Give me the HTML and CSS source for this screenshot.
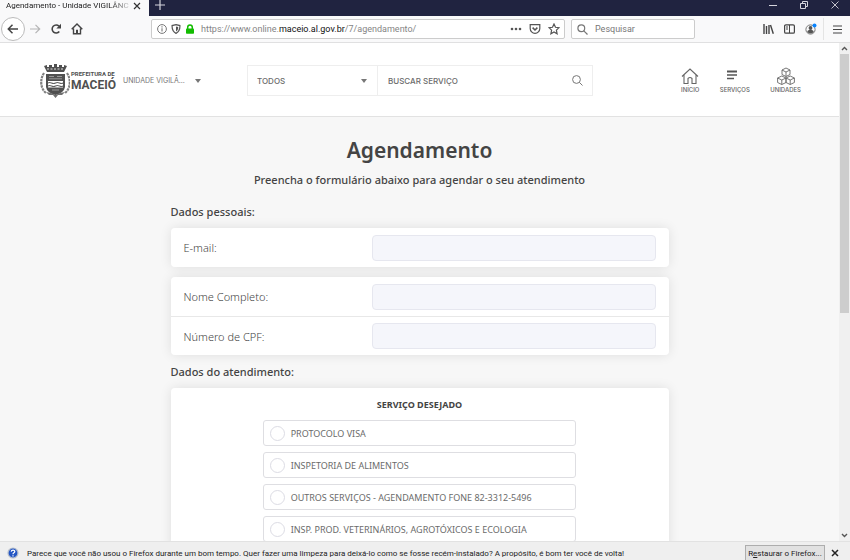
FILE: index.html
```html
<!DOCTYPE html>
<html lang="pt-BR">
<head>
    <meta charset="UTF-8">
    <meta name="viewport" content="width=device-width, initial-scale=1.0">
    <title>Agendamento - Unidade VIGILÂNCIA</title>
    <link rel="stylesheet" href="styles.css">
</head>
<body>
    <div class="titlebar">
        <div class="tab">
            <span class="tab-title">Agendamento - Unidade VIGILÂNC</span>
            <button class="icon-btn" aria-label="Fechar aba">
                <svg width="8" height="8" viewBox="0 0 8 8"><path d="M1 1l6 6M7 1l-6 6" stroke="#333" stroke-width="1.2"/></svg>
            </button>
        </div>
        <button class="icon-btn new-tab" aria-label="Nova aba">
            <svg width="10" height="10" viewBox="0 0 10 10"><path d="M5 0v10M0 5h10" stroke="#d5d5dd" stroke-width="1.2"/></svg>
        </button>
        <div class="window-buttons">
            <button class="icon-btn" aria-label="Minimizar">
                <svg width="8" height="8" viewBox="0 0 8 8"><path d="M0 4.5h8" stroke="#d5d5dd"/></svg>
            </button>
            <button class="icon-btn" aria-label="Restaurar">
                <svg width="8" height="8" viewBox="0 0 8 8" fill="none" stroke="#d5d5dd"><path d="M.5 2.5h5v5h-5zM2.5 2.500v-2h5v5h-2"/></svg>
            </button>
            <button class="icon-btn" aria-label="Fechar">
                <svg width="8" height="8" viewBox="0 0 8 8"><path d="M.5.5l7 7M7.500.5l-7 7" stroke="#d5d5dd" stroke-width=".9"/></svg>
            </button>
        </div>
    </div>

    <div class="toolbar">
        <div class="nav-buttons">
            <button class="icon-btn back" aria-label="Voltar">
                <svg width="12" height="12" viewBox="0 0 12 12" fill="none" stroke="#444" stroke-width="1.5"><path d="M11 6H1.500M5.500 1.800L1.300 6l4.200 4.200"/></svg>
            </button>
            <button class="icon-btn" aria-label="Avançar">
                <svg width="12" height="12" viewBox="0 0 12 12" fill="none" stroke="#b5b5b5" stroke-width="1.200"><path d="M1 6h9.500M6.500 1.800L10.700 6l-4.200 4.200"/></svg>
            </button>
            <button class="icon-btn" aria-label="Recarregar">
                <svg width="12" height="12" viewBox="0 0 12 12"><path d="M9.300 8.500A4 4 0 1 1 9 3.200" fill="none" stroke="#444" stroke-width="1.600"/><path d="M11 .8v4.700H6.300z" fill="#444"/></svg>
            </button>
            <button class="icon-btn" aria-label="Página inicial">
                <svg width="12" height="12" viewBox="0 0 12 12" fill="none" stroke="#444" stroke-width="1.400"><path d="M.7 6.300L6 1l5.300 5.300M2.500 5.500v5.200h7V5.500"/><path d="M6 11V6.800" stroke-width="2"/></svg>
            </button>
        </div>

        <div class="url-bar">
            <svg width="10" height="10" viewBox="0 0 10 10"><circle cx="5" cy="5" r="4.400" fill="none" stroke="#777"/><path d="M5 4.300v3.200M5 2.300v1.100" stroke="#777" stroke-width="1.100"/></svg>
            <svg width="10" height="10" viewBox="0 0 10 10"><path d="M5 .7l3.900.9c.2 4-.8 6.200-3.900 7.800C1.900 7.800.9 5.600 1.100 1.600z" fill="none" stroke="#555" stroke-width="1.200"/><path d="M5 2.500v5c1.500-1 2.200-2.500 2.200-4.500z" fill="#555"/></svg>
            <svg width="10" height="10" viewBox="0 0 10 10"><path d="M2.700 5V3.300a2.300 2.300 0 0 1 4.600 0V5" fill="none" stroke="#12bc00" stroke-width="1.500"/><rect x="1" y="4.400" width="8" height="5.300" rx=".8" fill="#12bc00"/></svg>
            <span class="url">https://www.online.<b>maceio.al.gov.br</b>/7/agendamento/</span>
            <button class="icon-btn" aria-label="Ações da página">
                <svg width="12" height="12" viewBox="0 0 12 12" fill="#555"><circle cx="2" cy="6" r="1.300"/><circle cx="6" cy="6" r="1.300"/><circle cx="10" cy="6" r="1.300"/></svg>
            </button>
            <button class="icon-btn" aria-label="Salvar no Pocket">
                <svg width="12" height="12" viewBox="0 0 12 12" fill="none" stroke="#555" stroke-width="1.200"><path d="M1.200 1.700h9.600v3.800a4.800 4.800 0 0 1-9.600 0z"/><path d="M3.600 4.600L6 7l2.400-2.400" stroke-width="1.500"/></svg>
            </button>
            <button class="icon-btn" aria-label="Adicionar aos favoritos">
                <svg width="12" height="12" viewBox="0 0 12 12" fill="none" stroke="#555" stroke-width="1.200"><path d="M6 1l1.500 3.300 3.500.4-2.600 2.400.7 3.600L6 8.900l-3.100 1.800.7-3.600L1 4.700l3.500-.4z"/></svg>
            </button>
        </div>

        <label class="web-search">
            <svg width="11" height="11" viewBox="0 0 11 11" fill="none" stroke="#777" stroke-width="1.200"><circle cx="4.300" cy="4.300" r="3.400"/><path d="M6.800 6.800l3.700 3.700"/></svg>
            <input type="text" placeholder="Pesquisar" aria-label="Pesquisar">
        </label>

        <div class="tools">
            <button class="icon-btn" aria-label="Biblioteca">
                <svg width="11" height="10" viewBox="0 0 11 10" stroke="#444" stroke-width="1.400"><path d="M1 0v10M3.500 2v8M6 1v9M7.500 1l2.800 8.800"/></svg>
            </button>
            <button class="icon-btn" aria-label="Barra lateral">
                <svg width="11" height="10" viewBox="0 0 11 10" fill="none" stroke="#444"><rect x=".6" y=".8" width="9.800" height="8.400" rx="1.300" stroke-width="1.200"/><path d="M5.500 1v8M2 3h2M2 5h2"/></svg>
            </button>
            <button class="icon-btn" aria-label="Conta">
                <svg width="12" height="12" viewBox="0 0 12 12"><circle cx="5.500" cy="6.500" r="4.600" fill="none" stroke="#777"/><circle cx="5.500" cy="5" r="1.900" fill="#555"/><path d="M2.200 9c.5-3 6.100-3 6.600 0-1.600 1.900-5 1.900-6.600 0z" fill="#555"/><circle cx="9.500" cy="2.400" r="2" fill="#0a84ff"/></svg>
            </button>
            <button class="icon-btn menu" aria-label="Menu">
                <svg width="9" height="9" viewBox="0 0 9 9"><path d="M0 1h9M0 4.500h9M0 8h9" stroke="#444" stroke-width="1.200"/></svg>
            </button>
        </div>
    </div>

    <div class="viewport">
        <div class="page">
            <header class="site-header">
                <a href="#" class="logo">
                    <svg width="30" height="34" viewBox="0 0 30 34">
                        <path d="M4 2l3-1v2h2V1h3v2h2V0h3v3h2V1h3v2h2V1l3 1-3 6H7z" fill="#505050"/>
                        <path d="M7 5h17" stroke="#fff" stroke-width=".8" stroke-dasharray="2 1.500"/>
                        <path d="M6 10h19v13q-1 6-9.500 8Q7 29 6 23z" fill="#505050"/>
                        <path d="M8 17h15v6.500H8z" fill="#fff"/>
                        <path d="M8 19c3-2 4 2 7.500 0s4.500 2 7.500 0M8 22c3-2 4 2 7.500 0s4.500 2 7.500 0" fill="none" stroke="#606060" stroke-width="1.100"/>
                        <path d="M9 12.500h5M17 12.500h5M9 14.800h13M12 26h7" stroke="#aaa" stroke-width=".8"/>
                        <path d="M4 9C0 15 0 24 6 29M27 9c4 6 4 15-2 20" fill="none" stroke="#808080" stroke-width="2.200" stroke-dasharray="2.500 .7"/>
                        <path d="M6 28l5 1 4.500 2 4.500-2 5-1-3 3-4 0-2.500 3-2.500-3-4 0z" fill="#707070"/>
                    </svg>
                    <span class="logo-text"><small>PREFEITURA DE</small><strong>MACEIÓ</strong></span>
                </a>
                <button class="unit-select">UNIDADE VIGILÂ... <span class="caret"></span></button>
                <form class="service-search">
                    <div class="category">
                        <select aria-label="Categoria"><option>TODOS</option></select>
                        <span class="caret"></span>
                    </div>
                    <input type="text" placeholder="BUSCAR SERVIÇO" aria-label="Buscar serviço">
                    <button type="button" class="icon-btn" aria-label="Buscar">
                        <svg width="11" height="11" viewBox="0 0 11 11" fill="none" stroke="#777"><circle cx="4.500" cy="4.500" r="3.900"/><path d="M7.300 7.300l3.200 3.200"/></svg>
                    </button>
                </form>
                <nav class="site-nav">
                    <a href="#">
                        <svg width="18" height="18" viewBox="0 0 18 18" fill="none" stroke="#666" stroke-width="1.100"><path d="M1 9.500L9 2l8 7.500M3 8v8.500h4V11.500q2-2 4 0v5h4V8"/></svg>
                        INÍCIO
                    </a>
                    <a href="#">
                        <svg width="18" height="18" viewBox="0 0 18 18" stroke="#555" stroke-width="1.300"><path d="M1 4.500h10" stroke-width="2"/><path d="M1 8h10M1 11.500h7"/></svg>
                        SERVIÇOS
                    </a>
                    <a href="#">
                        <svg width="18" height="18" viewBox="0 0 18 18" fill="none" stroke="#666" stroke-width=".9"><path d="M9 1l4 2v4.500L9 9.500l-4-2V3zM5 3l4 2 4-2M9 5v4.500"/><path d="M4.800 9l4.200 2v4.500l-4.200 2-4.200-2V11zM.6 11l4.200 2L9 11M4.800 13v4.500"/><path d="M13.200 9l4.200 2v4.500l-4.200 2-4.200-2V11l4.200 2 4.200-2M9 11l4.200-2M13.200 13v4.500"/></svg>
                        UNIDADES
                    </a>
                </nav>
            </header>

            <main class="booking">
                <h1>Agendamento</h1>
                <p class="lead">Preencha o formulário abaixo para agendar o seu atendimento</p>

                <h2>Dados pessoais:</h2>
                <div class="card">
                    <div class="row">
                        <label for="email">E-mail:</label>
                        <input type="email" id="email">
                    </div>
                </div>
                <div class="card">
                    <div class="row">
                        <label for="nome">Nome Completo:</label>
                        <input type="text" id="nome">
                    </div>
                    <div class="row">
                        <label for="cpf">Número de CPF:</label>
                        <input type="text" id="cpf">
                    </div>
                </div>

                <h2>Dados do atendimento:</h2>
                <div class="card services">
                    <h3>SERVIÇO DESEJADO</h3>
                    <label class="option"><input type="radio" name="servico">PROTOCOLO VISA</label>
                    <label class="option"><input type="radio" name="servico">INSPETORIA DE ALIMENTOS</label>
                    <label class="option"><input type="radio" name="servico">OUTROS SERVIÇOS - AGENDAMENTO FONE 82-3312-5496</label>
                    <label class="option"><input type="radio" name="servico">INSP. PROD. VETERINÁRIOS, AGROTÓXICOS E ECOLOGIA</label>
                </div>
            </main>
        </div>

        <div class="scrollbar">
            <svg width="7" height="11" viewBox="0 0 7 11"><path d="M1 7l2.500-2.500L6 7" fill="none" stroke="#555" stroke-width="1.400"/></svg>
            <div class="thumb"></div>
            <svg width="7" height="11" viewBox="0 0 7 11"><path d="M1 4l2.500 2.500L6 4" fill="none" stroke="#555" stroke-width="1.400"/></svg>
        </div>
    </div>

    <div class="notification">
        <svg width="12" height="12" viewBox="0 0 12 12"><circle cx="6" cy="6" r="5" fill="#2456c4" stroke="#b9c0cc" stroke-width="1.200"/><path d="M4.200 4.600c.2-2 3.600-2 3.600 0C7.800 6 6 5.700 6 7.200M6 8.200v1.200" fill="none" stroke="#fff" stroke-width="1.200"/></svg>
        <p>Parece que você não usou o Firefox durante um bom tempo. Quer fazer uma limpeza para deixá-lo como se fosse recém-instalado? A propósito, é bom ter você de volta!</p>
        <button class="restore">R<u>e</u>staurar o Firefox...</button>
        <button class="icon-btn" aria-label="Fechar aviso">
            <svg width="8" height="8" viewBox="0 0 8 8"><path d="M1 1l6 6M7 1l-6 6" stroke="#222" stroke-width="1.500"/></svg>
        </button>
    </div>
</body>
</html>
```
FILE: styles.css
```css
:root {
    --chrome: #f9f9fa;
    --text: #444;
    --muted: #6b6b6b;
    --border: #e8e8e8;
    --chrome-font: Roboto, "Noto Sans", sans-serif;
    --page-font: "Noto Sans", "Open Sans", sans-serif;
    --header-font: Inter, sans-serif;
}

* {
    margin: 0;
    padding: 0;
    box-sizing: border-box;
}

body {
    height: 100vh;
    display: flex;
    flex-direction: column;
    overflow: hidden;
    font-family: var(--chrome-font);
    font-size: 9px;
    color: var(--text);
    background: #f7f7f7;
}

button, input, select {
    font: inherit;
    color: inherit;
}

svg {
    display: block;
    flex: none;
}

.icon-btn {
    display: flex;
    align-items: center;
    justify-content: center;
    flex: none;
    border: 0;
    background: none;
}

/* browser chrome */
.titlebar {
    display: flex;
    flex: none;
    height: 16px;
    background: #202340;
}

.tab {
    display: flex;
    align-items: center;
    justify-content: space-between;
    width: 149px;
    height: 16px;
    padding: 0 8px 4px 6px;
    background: var(--chrome);
}

.tab-title {
    white-space: nowrap;
    font-size: 8px;
    line-height: 12px;
    color: #222;
    -webkit-mask-image: linear-gradient(to right, #000 85%, rgba(0, 0, 0, 0.2));
    mask-image: linear-gradient(to right, #000 85%, rgba(0, 0, 0, 0.2));
}

.new-tab {
    height: 10px;
    margin-left: 6px;
}

.window-buttons {
    display: flex;
    gap: 23px;
    height: 10px;
    margin-left: auto;
    padding-right: 11px;
}

.toolbar {
    display: flex;
    align-items: center;
    flex: none;
    height: 27px;
    padding: 0 8px 0 1px;
    background: var(--chrome);
    border-bottom: 1px solid #e0e0e1;
}

.nav-buttons {
    display: flex;
    align-items: center;
    gap: 9px;
    width: 150px;
}

.nav-buttons .back {
    width: 24px;
    height: 24px;
    margin-right: -5px;
    border: 1px solid #bbb;
    border-radius: 50%;
    background: #fff;
}

.url-bar, .web-search {
    display: flex;
    align-items: center;
    height: 20px;
    border: 1px solid #ccc;
    border-radius: 2px;
    background: #fff;
}

.url-bar {
    flex: 1;
    gap: 4px;
    max-width: 414px;
    padding: 0 4px 0 5px;
}

.url {
    flex: 1;
    padding-left: 2px;
    white-space: nowrap;
    color: #858585;
}

.url b {
    font-weight: 400;
    color: #111;
}

.url-bar .icon-btn + .icon-btn {
    margin-left: 3px;
}

.web-search {
    width: 124px;
    margin-left: 6px;
    padding: 0 5px;
    gap: 7px;
}

.web-search input {
    width: 100%;
    border: 0;
    outline: 0;
}

.web-search input::placeholder {
    color: #777;
}

.tools {
    display: flex;
    align-items: center;
    gap: 10px;
    margin-left: auto;
}

.tools .menu {
    height: 22px;
    margin-left: -4px;
    padding-left: 9px;
    border-left: 1px solid #e4e4e4;
}

/* page */
.viewport {
    display: flex;
    flex: 1;
    min-height: 0;
}

.page {
    flex: 1;
    min-width: 0;
    overflow: hidden;
    font-family: var(--page-font);
}

.scrollbar {
    display: flex;
    flex-direction: column;
    align-items: center;
    width: 11px;
    background: #f0f0f0;
}

.thumb {
    width: 9px;
    height: 52%;
    margin-bottom: auto;
    background: #cdcdcd;
}

.site-header {
    display: flex;
    align-items: center;
    height: 74px;
    padding: 2px 38px 0 40px;
    background: #fff;
    border-bottom: 1px solid #e2e2e2;
    font-family: var(--header-font);
    font-weight: 500;
}

.logo {
    display: flex;
    align-items: center;
    gap: 1px;
    width: 83px;
    color: #505050;
    text-decoration: none;
}

.logo-text {
    display: flex;
    flex-direction: column;
    gap: 2px;
    font-family: Roboto, sans-serif;
}

.logo-text small {
    font-size: 6px;
    font-weight: 700;
    line-height: 6px;
}

.logo-text strong {
    font-size: 12px;
    font-weight: 700;
    line-height: 12px;
}

.caret {
    border: 3px solid transparent;
    border-top: 4px solid #777;
    border-bottom: 0;
}

.unit-select {
    display: flex;
    align-items: center;
    justify-content: space-between;
    width: 78px;
    border: 0;
    background: none;
    font-size: 7px;
    font-weight: 400;
    white-space: nowrap;
    color: #777;
}

.service-search {
    display: flex;
    align-items: center;
    width: 346px;
    height: 31px;
    margin-left: 46px;
    padding-right: 9px;
    border: 1px solid #eee;
    font-size: 8px;
    color: var(--muted);
}

.category {
    display: flex;
    align-items: center;
    width: 130px;
    height: 100%;
    padding: 0 10px 0 9px;
    border-right: 1px solid #eee;
}

.category select {
    flex: 1;
    appearance: none;
    border: 0;
    background: none;
}

.service-search input {
    flex: 1;
    min-width: 0;
    padding-left: 10px;
    border: 0;
    outline: 0;
}

.service-search input::placeholder {
    color: var(--muted);
}

.site-nav {
    display: flex;
    justify-content: space-between;
    width: 120px;
    margin-left: auto;
}

.site-nav a {
    display: flex;
    flex-direction: column;
    align-items: center;
    gap: 1px;
    font-size: 6px;
    line-height: 8px;
    color: #666;
    text-decoration: none;
}

.booking {
    width: 92%;
    max-width: 498px;
    margin: 0 auto;
    padding-top: 17px;
}

h1 {
    font-size: 21px;
    font-weight: 600;
    line-height: 32px;
    text-align: center;
}

.lead {
    margin-top: 6px;
    font-size: 11px;
    font-weight: 500;
    line-height: 16px;
    text-align: center;
}

h2 {
    font-size: 11px;
    font-weight: 500;
    line-height: 16px;
}

.lead + h2 {
    margin-top: 16px;
}

.card {
    margin: 8px 0 9px;
    border-radius: 4px;
    background: #fff;
    box-shadow: 0 0 12px rgba(0, 0, 0, 0.1);
}

.card + .card {
    margin-top: 10px;
}

.row {
    display: flex;
    align-items: center;
    justify-content: space-between;
    height: 39px;
    padding: 0 13px;
}

.row + .row {
    border-top: 1px solid var(--border);
}

.row label {
    font-size: 11px;
    font-weight: 300;
}

.row input {
    width: 60%;
    height: 26px;
    padding: 0 8px;
    border: 1px solid #e6e7ef;
    border-radius: 4px;
    background: #f5f6fb;
}

.services {
    display: flex;
    flex-direction: column;
    align-items: center;
    gap: 6px;
    padding: 9px 0;
}

.services h3 {
    margin-bottom: 1px;
    font-size: 9px;
    font-weight: 700;
    line-height: 16px;
}

.option {
    display: flex;
    align-items: center;
    gap: 6px;
    width: 63%;
    height: 26px;
    padding-left: 6px;
    border: 1px solid #dedee2;
    border-radius: 3px;
    color: #6b6b6b;
}

.option input {
    appearance: none;
    width: 15px;
    height: 15px;
    border: 1px solid #dcdce4;
    border-radius: 50%;
}

.option input:checked {
    border: 5px solid #777;
}

.notification {
    display: flex;
    align-items: center;
    flex: none;
    height: 19px;
    padding: 4px 11px 0 7px;
    border-top: 1px solid #e2e2e2;
    background: #efefef;
    font-size: 8px;
    white-space: nowrap;
    color: #222;
}

.notification p {
    flex: 1;
    padding-left: 8px;
}

.restore {
    width: 80px;
    height: 16px;
    margin-right: 6px;
    border: 1px solid #adadad;
    background: #e1e1e1;
}
```
